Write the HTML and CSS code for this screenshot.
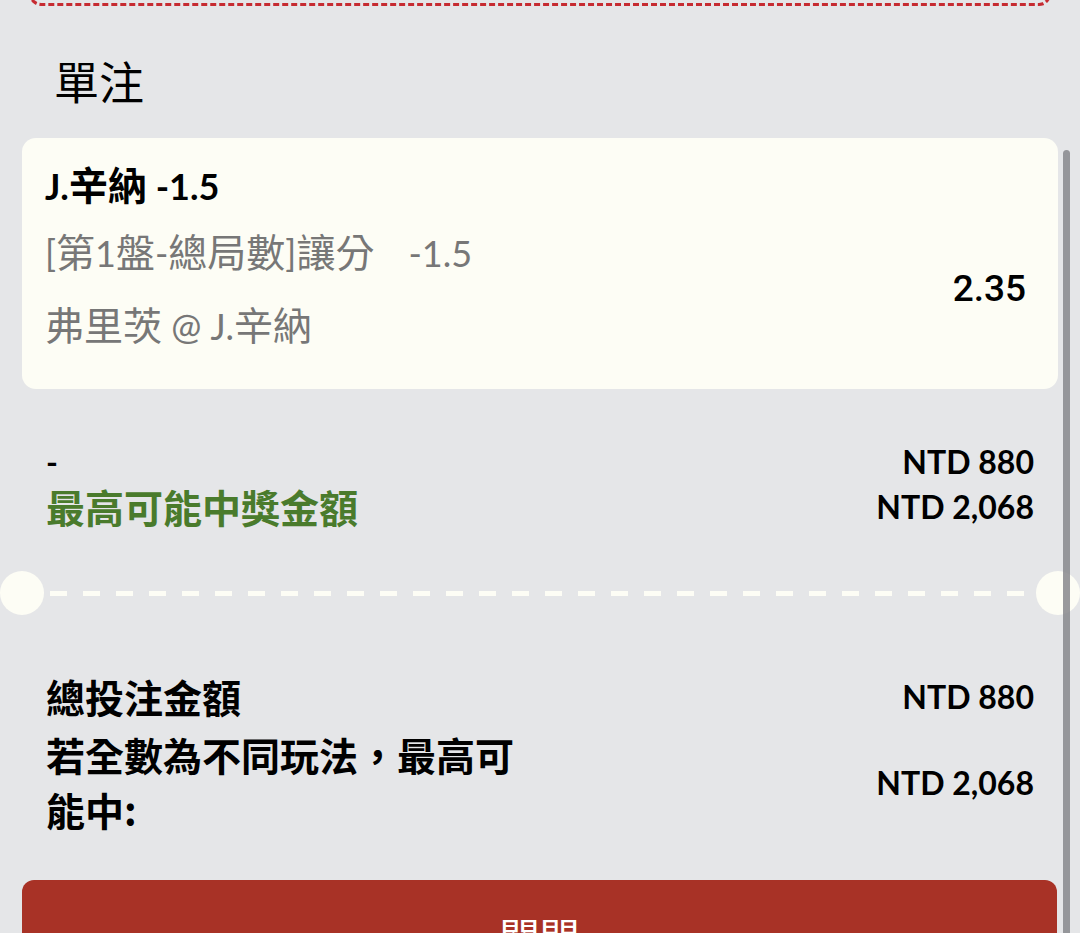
FILE: index.html
```html
<!DOCTYPE html>
<html>
    <head>
        <meta charset="utf-8">
        <meta name="viewport" content="width=device-width, initial-scale=1">
        <title>單注</title>
        <link rel="stylesheet" href="styles.css">
    </head>
    <body>
        <div class="sheet">
            <div class="prev-box"></div>
            <h2 class="sheet-title">單注</h2>
            <div class="ticket">
                <div class="bet-card">
                    <div class="bet-selection">J.<span class="zh">辛納</span> -1.5</div>
                    <div class="bet-body">
                        <div class="bet-info">
                            <div class="bet-market">[<span class="zh">第</span>1<span class="zh">盤</span>-<span class="zh">總局數</span>]<span class="zh">讓分</span><span class="bet-handicap">-1.5</span></div>
                            <div class="bet-event"><span class="zh">弗里茨</span> @ J.<span class="zh">辛納</span></div>
                        </div>
                        <div class="bet-odds">2.35</div>
                    </div>
                </div>
                <div class="bet-rows">
                    <div class="row">
                        <span class="row-label">-</span>
                        <span class="row-value">NTD 880</span>
                    </div>
                    <div class="row">
                        <span class="row-label zh is-win">最高可能中獎金額</span>
                        <span class="row-value">NTD 2,068</span>
                    </div>
                </div>
                <div class="ticket-divider"></div>
                <div class="summary">
                    <div class="row">
                        <span class="row-label zh">總投注金額</span>
                        <span class="row-value">NTD 880</span>
                    </div>
                    <div class="row">
                        <span class="row-label zh">若全數為不同玩法，最高可能中:</span>
                        <span class="row-value">NTD 2,068</span>
                    </div>
                </div>
            </div>
            <button class="close-btn" type="button">關閉</button>
            <div class="scrollbar"></div>
        </div>
    </body>
</html>
```

FILE: styles.css
```css
/* Overall */

* {
    box-sizing: border-box;
}

html, body {
    padding: 0;
    margin: 0;
    height: 100%;
    overflow: hidden;
}

html {
    background: #E5E6E8;
    color: #000;
    font-family: Lato, 'Noto Sans CJK TC', sans-serif;
    font-size: 32px;
}

.zh {
    font-family: 'Noto Sans CJK TC', sans-serif;
    font-size: 39px;
}

/* Sheet */

.sheet {
    position: relative;
    display: flow-root;
    height: 100%;
}

.prev-box {
    height: 40px;
    margin: -34px 29px 0;
    border: 3px dashed #C62B31;
    border-radius: 12px;
}

.sheet-title {
    margin: 47px 0 29px 54px;
    font-family: 'Noto Sans CJK TC', sans-serif;
    font-size: 45px;
    font-weight: 400;
    line-height: 56px;
}

.ticket {
    margin: 0 22px;
}

/* Bet card */

.bet-card {
    background: #FDFDF5;
    border-radius: 14px;
    padding: 23px 32px 38px 23px;
    font-size: 36px;
}

.bet-selection {
    font-weight: 700;
    line-height: 44px;
}

.bet-body {
    display: flex;
    align-items: center;
    justify-content: space-between;
    margin-top: 17px;
}

.bet-market, .bet-event {
    color: #777;
    line-height: 50px;
}

.bet-handicap {
    margin-left: 34px;
}

.bet-event {
    margin-top: 20px;
}

.bet-odds {
    font-family: Roboto, sans-serif;
    font-size: 37px;
    font-weight: 500;
}

/* Rows */

.row {
    display: flex;
    align-items: center;
    justify-content: space-between;
    font-weight: 700;
}

.row-value {
    white-space: nowrap;
}

.bet-rows {
    margin-top: 50px;
    padding: 0 24px;
}

.bet-rows .row {
    line-height: 45px;
}

.row-label.is-win {
    color: #4A7B2C;
}

.ticket-divider {
    position: relative;
    height: 44px;
    margin: 42px 0 0;
    padding: 0 28px;
    background: linear-gradient(to right, #FDFDF5 17px, transparent 17px) 28px center / 33px 5px repeat-x;
    background-clip: content-box;
}

.ticket-divider::before, .ticket-divider::after {
    content: '';
    position: absolute;
    top: 0;
    width: 44px;
    height: 44px;
    border-radius: 50%;
    background: #FDFDF5;
}

.ticket-divider::before {
    left: -22px;
}

.ticket-divider::after {
    right: -22px;
}

.summary {
    margin-top: 54px;
    padding: 0 24px;
    display: flex;
    flex-direction: column;
    gap: 3px;
}

.summary .row {
    line-height: 55px;
}

.summary .row-label {
    max-width: 50%;
}

/* Button */

.close-btn {
    display: block;
    width: calc(100% - 45px);
    height: 110px;
    margin: 43px 0 0 22px;
    border: 0;
    border-radius: 12px;
    background: #A83226;
    color: #FFF;
    font-family: 'Noto Sans CJK TC', sans-serif;
    font-size: 40px;
}

.scrollbar {
    position: absolute;
    top: 150px;
    right: 10px;
    bottom: 0;
    width: 7px;
    border-radius: 4px 4px 0 0;
    background: rgba(135, 135, 140, 0.85);
}
```
